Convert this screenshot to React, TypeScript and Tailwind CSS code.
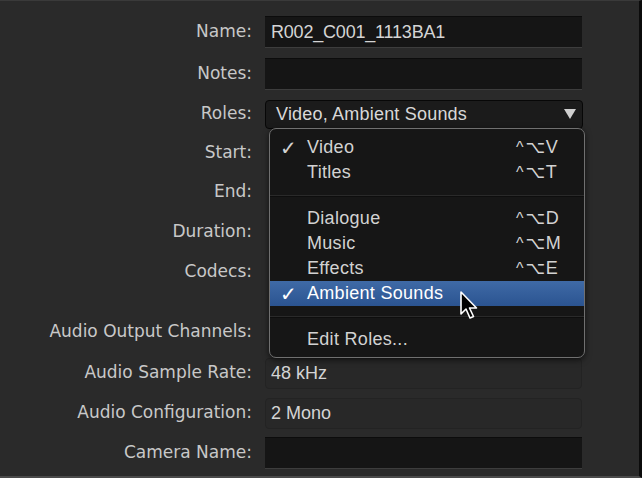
import React from "react";

const labelFont = { fontFamily: '"DejaVu Sans", sans-serif' };
const valueFont = { fontFamily: '"Liberation Sans", Arial, sans-serif' };

type Row = {
  label: string;
  kind: "dark" | "popup" | "flat" | "none";
  value?: string;
  mt: string;
};

const rows: Row[] = [
  { label: "Name:", kind: "dark", value: "R002_C001_1113BA1", mt: "mt-0" },
  { label: "Notes:", kind: "dark", value: "", mt: "mt-[2px]" },
  { label: "Roles:", kind: "popup", value: "Video, Ambient Sounds", mt: "mt-0" },
  { label: "Start:", kind: "none", mt: "mt-[-1px]" },
  { label: "End:", kind: "none", mt: "mt-[-1px]" },
  { label: "Duration:", kind: "none", mt: "mt-0" },
  { label: "Codecs:", kind: "none", mt: "mt-0" },
  { label: "Audio Output Channels:", kind: "none", mt: "mt-[20px]" },
  { label: "Audio Sample Rate:", kind: "flat", value: "48 kHz", mt: "mt-[1px]" },
  { label: "Audio Configuration:", kind: "flat", value: "2 Mono", mt: "mt-0" },
  { label: "Camera Name:", kind: "dark", value: "", mt: "mt-0" },
];

type Item =
  | { sep: true }
  | { sep?: false; label: string; keyName?: string; checked?: boolean; active?: boolean };

const items: Item[] = [
  { label: "Video", keyName: "V", checked: true },
  { label: "Titles", keyName: "T" },
  { sep: true },
  { label: "Dialogue", keyName: "D" },
  { label: "Music", keyName: "M" },
  { label: "Effects", keyName: "E" },
  { label: "Ambient Sounds", checked: true, active: true },
  { sep: true },
  { label: "Edit Roles..." },
];

function Field({ row }: { row: Row }) {
  if (row.kind === "dark") {
    return (
      <div
        className="w-[317px] h-[32px] bg-[#151515] border-t border-[#0c0c0c] border-b border-b-[#3d3d3d] flex items-center pl-[6px] text-[18px] text-[#d4d4d4] tracking-[-0.2px]"
        style={valueFont}
      >
        {row.value}
      </div>
    );
  }
  if (row.kind === "popup") {
    return (
      <div
        className="w-[318px] h-[29px] bg-[#1b1b1b] border border-[#070707] rounded-[4px] flex items-center justify-between pl-[10px] pr-[6px] text-[18px] text-[#d8d8d8] tracking-[0.2px]"
        style={valueFont}
      >
        <span>{row.value}</span>
        <svg width="12" height="10" viewBox="0 0 12 10">
          <path d="M0 0 L12 0 L6 10 Z" fill="#cfcfcf" />
        </svg>
      </div>
    );
  }
  if (row.kind === "flat") {
    return (
      <div
        className="w-[317px] h-[31px] bg-[#282828] border border-[#232323] rounded-[4px] flex items-center pl-[5px] text-[18px] text-[#d4d4d4]"
        style={valueFont}
      >
        {row.value}
      </div>
    );
  }
  return <div className="w-[317px]" />;
}

function Menu() {
  return (
    <div className="absolute left-[269px] top-[127px] w-[316px] h-[230px] bg-[#161616] border border-[#707070] rounded-[7px] pt-[6px] shadow-[0_2px_6px_rgba(0,0,0,0.6)] overflow-hidden">
      {items.map((it, i) =>
        it.sep ? (
          <div key={i} className="h-[21px] flex items-center">
            <div className="w-full h-[2px] bg-[#2a2a2a] border-b border-[#0e0e0e]" />
          </div>
        ) : (
          <div
            key={i}
            className={
              "h-[25px] flex items-center relative text-[18px] tracking-[0.3px] " +
              (it.active
                ? "bg-gradient-to-b from-[#3f6aa6] to-[#2b5491] text-white"
                : "text-[#d2d2d2]")
            }
            style={valueFont}
          >
            <span className="w-[37px] pl-[10px] text-[20px] font-bold" style={labelFont}>
              {it.checked ? "✓" : ""}
            </span>
            <span>{it.label}</span>
            {it.keyName && (
              <span
                className="absolute left-[246px] flex items-center text-[18px]"
                style={valueFont}
              >
                <span className="text-[16px] mr-[2px]">^</span>
                <span className="text-[17px]" style={labelFont}>⌥</span>
                <span>{it.keyName}</span>
              </span>
            )}
          </div>
        )
      )}
    </div>
  );
}

function Cursor() {
  return (
    <svg
      className="absolute left-[458px] top-[289px]"
      width="22"
      height="30"
      viewBox="0 0 22 30"
    >
      <path
        d="M3 2 L3 24 L8 19 L12 28 L15.5 26.5 L11.5 18 L18.5 18 Z"
        fill="#000"
        stroke="#fff"
        strokeWidth="1.6"
        strokeLinejoin="round"
      />
    </svg>
  );
}

export default function App() {
  return (
    <div className="relative w-[642px] h-[478px] bg-[#2a2a2a] overflow-hidden border-t border-[#3a3a3a] border-r-[3px] border-r-[#0b0b0b] border-b-[2px] border-b-[#4a4a4a]">
      <div className="flex flex-col pt-[11px]">
        {rows.map((r) => (
          <div key={r.label} className={"flex items-center h-[40px] " + r.mt}>
            <div
              className="w-[253px] text-right text-[17px] text-[#c8c8c8] pr-[1px]"
              style={labelFont}
            >
              {r.label}
            </div>
            <div className="ml-[12px]">
              <Field row={r} />
            </div>
          </div>
        ))}
      </div>
      <Menu />
      <Cursor />
    </div>
  );
}
